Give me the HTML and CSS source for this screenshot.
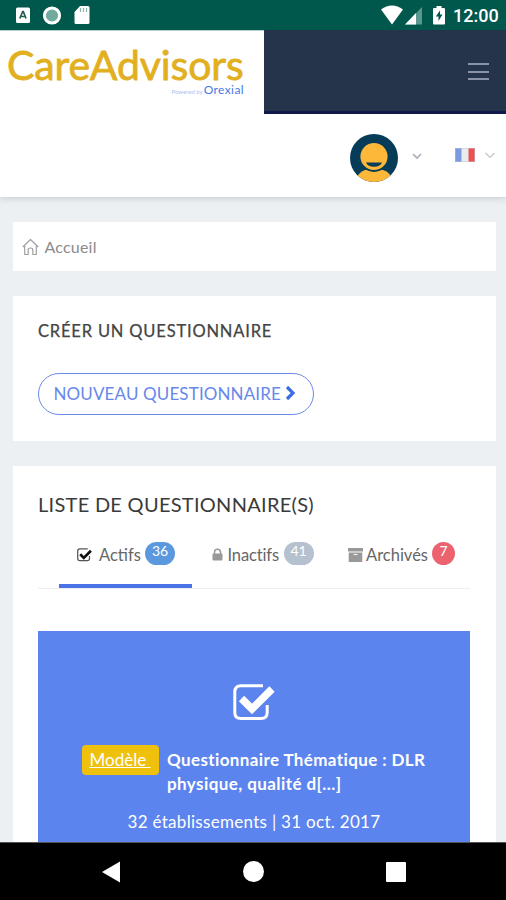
FILE: index.html
```html
<!DOCTYPE html>
<html lang="fr">
<head>
<meta charset="utf-8">
<title>CareAdvisors</title>
<link rel="stylesheet" href="styles.css">
</head>
<body>
<div class="screen">
  <div class="status">
    <svg class="status-left" width="90" height="30" viewBox="0 0 90 30">
      <rect x="16" y="7.500" width="14" height="15.500" rx="1.500" fill="#fff"/>
      <path d="M19.800 18.500 22.700 11.500h.6l2.700 7M20.500 16.500h5" fill="none" stroke="#245c53" stroke-width="1.700"/>
      <circle cx="52" cy="15.500" r="7.600" fill="#72aaa0" stroke="#fff" stroke-width="3"/>
      <path d="M80 6h8q1.500 0 1.500 1.500v15q0 1.500-1.500 1.500H76q-1.500 0-1.500-1.500V12z" fill="#fff"/>
      <path d="M80.500 8v4M83.500 8v4M86.500 8v4" stroke="#8bb5af" stroke-width="1.200"/>
    </svg>
    <svg class="status-right" width="68" height="30" viewBox="0 0 68 30">
      <path d="M1 9.500Q12 1.500 23 9.500L12 24.500z" fill="#fff"/>
      <path d="M42 7v17.500H25z" fill="#5b978e"/>
      <path d="M36 13v11.500H25z" fill="#fff"/>
      <path d="M54 8h2.500V6h5v2H64q1 0 1 1v14.500q0 1-1 1H54q-1 0-1-1V9q0-1 1-1z" fill="#fff"/>
      <path d="M60 10.500 55.800 16.500h2.700v4.500l4-6.500h-2.500z" fill="#00574b"/>
    </svg>
    <span class="clock">12:00</span>
  </div>
  <header class="brandbar">
    <div class="logo">
      <div class="logo-name">CareAdvisors</div>
      <div class="logo-sub"><span class="powered">Powered by</span><span class="orexial">Orexial</span></div>
    </div>
    <div class="menu"><i></i><i></i><i></i></div>
  </header>
  <div class="userbar">
    <svg class="avatar" width="48" height="48" viewBox="0 0 48 48">
      <defs><clipPath id="disc"><circle cx="24" cy="24" r="24"/></clipPath></defs>
      <g clip-path="url(#disc)">
        <path d="M0 0h48v48H0z" fill="#063c58"/>
        <path d="M5 48q3-10 10-12h18q8 2 10 12z" fill="#fdb739"/>
        <circle cx="24" cy="23" r="15" fill="#063c58"/>
        <circle cx="24" cy="22.500" r="13.600" fill="#fdb739"/>
        <path d="M16 28.500h16q-2 4.300-8 4.300t-8-4.300z" fill="#063c58"/>
      </g>
    </svg>
    <svg class="chev-user" width="10" height="7" viewBox="0 0 10 7"><path d="M1 1l4 4 4-4" fill="none" stroke="#a9b0b8" stroke-width="1.700"/></svg>
    <svg class="flag" width="20" height="14" viewBox="0 0 20 14">
      <path d="M0 0h20v14H0z" fill="#e9edf0"/><path d="M0 0h6.500v14H0z" fill="#7b9be0"/><path d="M13.500 0H20v14h-6.500z" fill="#ea5150"/>
      <path d="M.5.5h19v13H.5z" fill="none" stroke="#bfc4d8" stroke-opacity=".5"/>
    </svg>
    <svg class="chev-lang" width="10" height="7" viewBox="0 0 10 7"><path d="M.5 1 5 5.500 9.500 1" fill="none" stroke="#c0c5cc" stroke-width="1.200"/></svg>
  </div>
  <main class="content">
    <nav class="crumb">
      <svg width="17" height="18" viewBox="0 0 17 18" fill="none" stroke="#a0a0a0" stroke-width="1.200" stroke-linejoin="round"><path d="M.8 9 8.500 1.500 16.200 9M2.700 8v8.500h3.500v-5q0-1.500 2.300-1.500t2.300 1.500v5h3.500V8"/></svg>
      <span class="crumb-text">Accueil</span>
    </nav>
    <section class="card create">
      <h2 class="create-title">CRÉER UN QUESTIONNAIRE</h2>
      <a class="button"><span class="button-text">NOUVEAU QUESTIONNAIRE</span>
        <svg width="11" height="16" viewBox="0 0 11 16"><path d="M2 2l6 6-6 6" fill="none" stroke="#3c6de8" stroke-width="3.200"/></svg>
      </a>
    </section>
    <section class="card list">
      <h2 class="list-title">LISTE DE QUESTIONNAIRE(S)</h2>
      <div class="tabs">
        <div class="tab active">
          <svg width="15" height="14" viewBox="0 0 42 38"><path d="M30 2H8Q2 2 2 8v21q0 6 6 6h21q6 0 6-6v-7" fill="none" stroke="#555" stroke-width="3.500"/><path d="M9 17l10 10L39 7" fill="none" stroke="#111" stroke-width="7.500"/></svg>
          <span class="t-actifs">Actifs</span><b class="badge blue">36</b>
        </div>
        <div class="tab inactive">
          <svg width="11" height="13" viewBox="0 0 11 13"><path d="M2.500 6V4.200a3 3 0 0 1 6 0V6" fill="none" stroke="#999" stroke-width="1.500"/><rect x=".5" y="5.500" width="10" height="7" rx="1" fill="#999"/></svg>
          <span class="t-inactifs">Inactifs</span><b class="badge gray">41</b>
        </div>
        <div class="tab archive">
          <svg width="15" height="14" viewBox="0 0 15 14"><path d="M0 0h15v3.500H0zM.7 4.500h13.600V14H.7z" fill="#999"/><path d="M5.500 6.500h4" stroke="#eee" stroke-width="1.200"/></svg>
          <span class="t-archives">Archivés</span><b class="badge red">7</b>
        </div>
      </div>
      <article class="survey">
        <svg class="survey-icon" width="42" height="37" viewBox="0 0 42 37"><path d="M30 1.800H8Q1.800 1.800 1.800 8v20.500q0 6 6.200 6h20q6.200 0 6.200-6V21" fill="none" stroke="#fff" stroke-width="3"/><path d="M8.500 14.500 19 25 39 5" fill="none" stroke="#fff" stroke-width="7.500"/></svg>
        <div class="survey-head">
          <a class="model"><span>Modèle&nbsp;</span></a>
          <h3><span class="line1">Questionnaire Thématique : DLR</span><br><span class="line2">physique, qualité d[...]</span></h3>
        </div>
        <p class="meta">32 établissements | 31 oct. 2017</p>
      </article>
    </section>
  </main>
  <footer class="android">
    <svg width="18" height="22" viewBox="0 0 18 22"><path d="M0 11 18 .5v21z" fill="#fff"/></svg>
    <svg width="21" height="21" viewBox="0 0 21 21"><circle cx="10.500" cy="10.500" r="10.500" fill="#fff"/></svg>
    <svg width="20" height="20" viewBox="0 0 20 20"><rect width="20" height="20" rx="1" fill="#fff"/></svg>
  </footer>
</div>
</body>
</html>
```
FILE: styles.css
```css
* { box-sizing: border-box; }
body { margin: 0; font-family: Lato, "Open Sans", sans-serif; color: #444; }
svg { display: block; flex: none; }
h2, h3, p { margin: 0; }
span, b, p, h2 { white-space: nowrap; }
.screen { width: 506px; height: 900px; overflow: hidden; display: flex; flex-direction: column; background: #ecf0f3; }
.status { height: 30px; flex: none; display: flex; background: #00574b; }
.status-right { margin-left: 290px; }
.clock { margin-left: 5px; font: 500 18px/32px Roboto, sans-serif; color: #fff; }
.brandbar { height: 84px; flex: none; display: flex; background: linear-gradient(#26344b 81px, #11194b 81px); }
.logo { width: 264px; height: 84px; background: #fff; padding-left: 7px; border-top: 1px solid #b5cfcb; }
.logo-name { height: 53px; padding-top: 10px; font-size: 41px; line-height: 47px; color: #e2b01f; -webkit-text-stroke: .8px #e2b01f; letter-spacing: -.12px; }
.logo-sub { display: flex; width: 237px; justify-content: flex-end; align-items: baseline; line-height: 12px; }
.powered { font-size: 6px; color: #afc1ef; margin-right: 1px; }
.orexial { font-size: 12px; letter-spacing: .4px; color: #4779df; }
.menu { margin: 33px 0 0 204px; width: 21px; display: flex; flex-direction: column; gap: 5.500px; }
.menu i { height: 2px; background: #8993a5; }
.userbar { position: relative; height: 83px; flex: none; display: flex; align-items: flex-start; background: #fff; box-shadow: 0 2px 6px #ccd0d4; clip-path: inset(0 0 -12px 0); }
.avatar { margin: 19.500px 0 0 349.500px; }
.chev-user { margin: 39px 0 0 14px; }
.flag { margin: 34px 0 0 33.500px; }
.chev-lang { margin: 38px 0 0 9.500px; }
.content { flex: 1; min-height: 0; overflow: hidden; padding: 25px 10.500px 0 12.500px; }
.crumb { height: 49px; background: #fff; display: flex; align-items: center; padding-left: 9px; gap: 6px; font-size: 16px; letter-spacing: .2px; color: #8b8b8b; }
.card { background: #fff; margin-top: 25px; padding: 0 25.500px; }
.create { height: 145px; }
.create-title { padding-top: 24px; font-size: 16.500px; line-height: 22px; font-weight: 400; letter-spacing: .82px; -webkit-text-stroke: .25px #444; }
.button { display: flex; align-items: center; width: 276px; height: 42px; margin: 31px 0 0 -.5px; padding-left: 15px; border: 1px solid #6c8ae8; border-radius: 21px; gap: 4px; font-size: 17px; line-height: 22px; color: #6788ea; }
.button svg { margin-top: -2px; }
.button-text { letter-spacing: .13px; }
.list { height: 420px; }
.list-title { padding-top: 25px; font-size: 20px; line-height: 27px; font-weight: 400; letter-spacing: .28px; color: #3a3a3a; }
.tabs { display: flex; height: 71px; border-bottom: 1px solid #eee; padding-left: 21px; font-size: 16.500px; color: #666; }
.tab { height: 70px; display: flex; align-items: flex-start; padding-top: 24px; line-height: 26px; }
.tab svg { margin-top: 6px; }
.active { width: 133px; padding-left: 18px; border-bottom: 4px solid #4c72e8; }
.t-actifs { margin-left: 7px; width: 41px; }
.inactive { width: 136px; padding-left: 20px; }
.t-inactifs { margin-left: 4.500px; width: 51px; letter-spacing: -.15px; }
.archive { padding-left: 20px; }
.t-archives { margin-left: 3px; width: 61px; }
.badge { height: 23px; margin: 0 0 0 5px; width: 30px; border-radius: 12px; text-align: center; font-size: 14px; line-height: 18px; font-weight: 400; color: #fff; }
.blue { background: #5b98de; }
.gray { background: #b6c1cf; }
.red { background: #ec6370; width: 23px; }
.survey { margin-top: 42px; height: 230px; background: #5c84ee; color: #fff; padding-top: 53px; }
.survey-icon { margin-left: 195px; }
.survey-head { display: flex; margin-top: 27px; padding-left: 43.500px; }
.model { margin-top: -3px; width: 77px; height: 30px; padding-left: 8px; border-radius: 4px; background: #efc10d; font-size: 17px; line-height: 29px; text-decoration: underline; text-decoration-thickness: 1px; }
h3 { margin: -.5px 0 0 8.500px; font-size: 17px; line-height: 24.500px; font-weight: 700; letter-spacing: .38px; }
.line2 { letter-spacing: .42px; }
.meta { margin-top: 12px; padding-left: 89.500px; font-size: 17px; line-height: 26px; letter-spacing: .3px; }
.android { height: 58px; flex: none; background: #000; display: flex; align-items: center; padding-left: 102px; gap: 122.500px; border-top: 1px solid #555; }
```
